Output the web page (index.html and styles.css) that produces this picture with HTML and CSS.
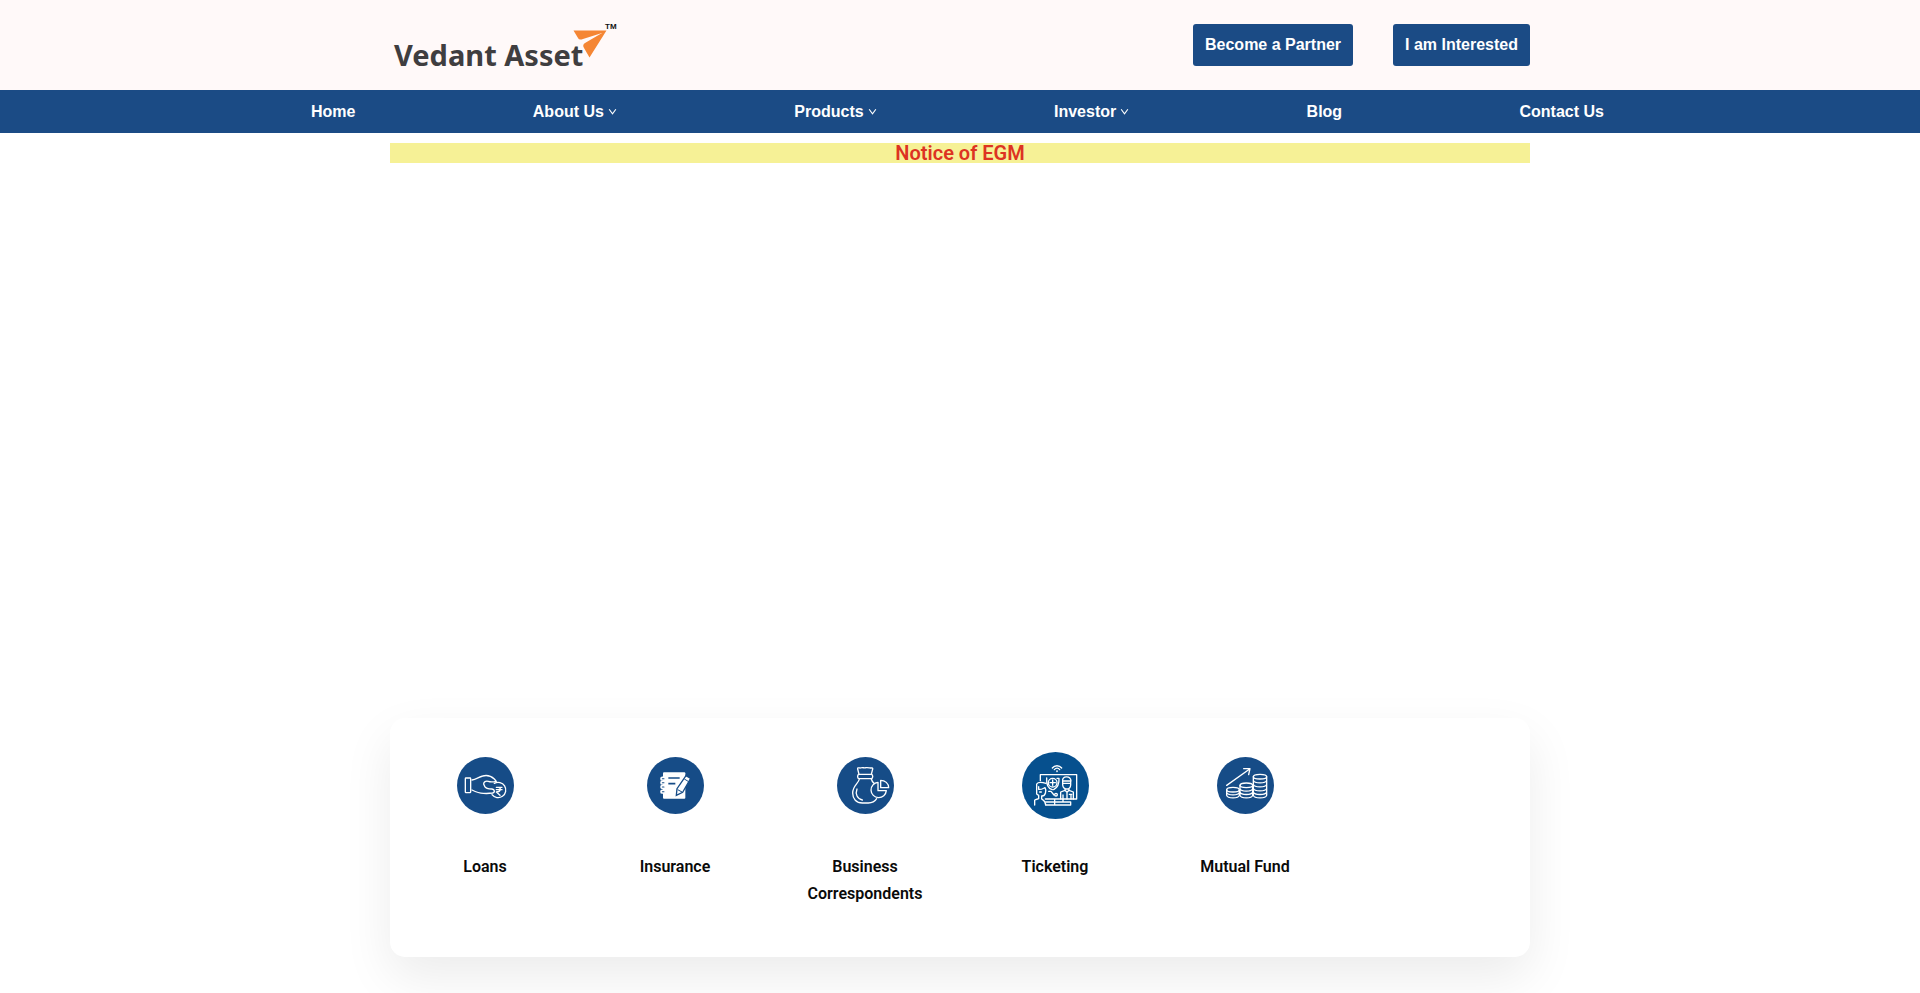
FILE: index.html
```html
<!DOCTYPE html>
<html lang="en">
<head>
<meta charset="utf-8">
<meta name="viewport" content="width=device-width, initial-scale=1">
<title>Vedant Asset</title>
<link rel="stylesheet" href="styles.css">
</head>
<body>
<header class="topbar">
  <div class="container topbar-inner">
    <a class="logo" href="#" aria-label="Vedant Asset">
      <svg width="234" height="60" viewBox="0 -5 234 60">
        <text class="logo-name" x="4" y="46">Vedant Asset</text>
        <path fill="#f58634" d="M183.500 10.500H216.500L199.500 37.500L194 28Q192 25 195 23L212 13L193 19Q189 20.500 188 18Z"/>
        <text class="logo-tm" x="215" y="9">TM</text>
      </svg>
    </a>
    <div class="actions">
      <a class="button" href="#">Become a Partner</a>
      <a class="button" href="#">I am Interested</a>
    </div>
  </div>
</header>
<nav class="mainnav" aria-label="Main">
  <ul class="nav-list">
    <li><a href="#">Home</a></li>
    <li><a href="#">About Us<svg class="chevron" viewBox="0 0 8 8"><path d="M1 2L4 6L7 2"/></svg></a></li>
    <li><a href="#">Products<svg class="chevron" viewBox="0 0 8 8"><path d="M1 2L4 6L7 2"/></svg></a></li>
    <li><a href="#">Investor<svg class="chevron" viewBox="0 0 8 8"><path d="M1 2L4 6L7 2"/></svg></a></li>
    <li><a href="#">Blog</a></li>
    <li><a href="#">Contact Us</a></li>
  </ul>
</nav>
<main class="container page">
  <a class="notice" href="#">Notice of EGM</a>
  <section class="hero"></section>
  <section class="services">
    <a class="service" href="#">
      <span class="service-icon"><svg class="disc" viewBox="51 51 171 171">
        <circle class="bg" cx="136.500" cy="136.500" r="85.500"/>
        <g class="line">
          <rect x="76" y="114" width="16" height="44" rx="2"/>
          <path d="M96 120C108 119 116 111 128 108C142 104 151 106 163 117L169 124M96 150C106 155 118 160 130 160C142 161 151 160 158 159C166 157 164 148 156 147C145 147 137 145 134 139L131 132C131 125 137 122 145 124C153 127 159 126 169 124"/>
          <path d="M163 130A23 23 0 1 1 156 164"/>
          <path d="M169 142H186M169 149H186M174 142C184 142 184 156 169 156L180 166"/>
        </g>
      </svg></span>
      <span class="service-name">Loans</span>
    </a>
    <a class="service" href="#">
      <span class="service-icon"><svg class="disc" viewBox="621 51 171 171">
        <circle class="bg" cx="706.500" cy="136.500" r="85.500"/>
        <rect x="669" y="97" width="67" height="79" rx="3" fill="#fff"/>
        <g fill="#164c87" stroke="#fff" stroke-width="5"><rect x="663" y="112" width="13" height="8" rx="4"/><rect x="663" y="124" width="13" height="8" rx="4"/><rect x="663" y="137" width="13" height="8" rx="4"/><rect x="663" y="151" width="13" height="8" rx="4"/></g>
        <g fill="none" stroke="#164c87" stroke-width="5"><path d="M685 114H719M685 131H706"/></g>
        <path d="M738 107L752 115L728 157L709 166L711 146Z" fill="#fff" stroke="#164c87" stroke-width="4"/>
        <path d="M733 117L746 125M713 149L726 156" fill="none" stroke="#164c87" stroke-width="3"/>
      </svg></span>
      <span class="service-name">Insurance</span>
    </a>
    <a class="service" href="#">
      <span class="service-icon"><svg class="disc" viewBox="51 51 171 171">
        <circle class="bg" cx="136.500" cy="136.500" r="85.500"/>
        <g class="line">
          <path d="M117 103L113 87C112 82 116 84 121 84C127 81 132 85 138 83C144 82 149 84 154 84C159 83 159 86 157 91L154 103"/>
          <rect x="113" y="103" width="45" height="13" rx="5"/>
          <path d="M118 117C116 130 98 138 98 159C98 177 109 189 127 189H145C157 189 165 184 170 176M154 117C155 121 158 126 162 130M111 147C105 162 112 177 127 180"/>
          <path d="M174 127A23 23 0 1 0 199 152H174Z"/>
          <path d="M182 121V143H206C206 130 195 121 182 121Z"/>
        </g>
      </svg></span>
      <span class="service-name">Business Correspondents</span>
    </a>
    <a class="service" href="#">
      <span class="service-icon"><svg class="disc disc-large" viewBox="606 36 201 201">
        <circle cx="706.500" cy="136.500" r="100.500" fill="#06508e"/>
        <g class="line">
          <path d="M697 84C704 75 718 75 725 84M703 89C708 83 715 83 719 89"/><circle cx="711" cy="94" r="1"/>
          <path d="M661 122V104H770V177H676M677 186H752V195H678M704 178V186M729 178V186M704 195V187"/>
          <circle cx="698" cy="128" r="13"/><path d="M698 120V136M690 128H706M680 114C679 130 681 145 697 149M711 115H717C718 132 713 143 701 149"/>
          <path d="M644 195V181C645 178 652 178 656 176V166L650 162V132C654 126 665 126 678 130M656 140V148C663 150 670 145 675 143C680 151 677 169 665 168M659 156H664M665 168V177C671 181 677 184 677 195M686 154H693L702 165"/>
          <circle cx="708" cy="164" r="4"/>
          <path d="M728 123C725 107 752 106 753 123ZM728 123V135C730 151 751 151 752 135V123M728 130H752M735 145V151L741 157L747 151V145M735 151L722 156V177M747 151L760 156V177M741 157V177M729 165V177M753 165V177M748 163H755"/>
        </g>
      </svg></span>
      <span class="service-name">Ticketing</span>
    </a>
    <a class="service" href="#">
      <span class="service-icon"><svg class="disc" viewBox="51 51 171 171">
        <circle class="bg" cx="136.500" cy="136.500" r="85.500"/>
        <g class="line">
          <path d="M80 136L149 87M131 86L150 86L146 104"/>
          <ellipse cx="99" cy="149" rx="19" ry="7"/><path d="M80 149V166C83 176 115 176 118 166V149M80 157C83 167 115 167 118 157"/>
          <ellipse cx="139" cy="136" rx="19" ry="7"/><path d="M120 136V166C123 176 155 176 158 166V136M120 146C123 156 155 156 158 146M120 156C123 166 155 166 158 156"/>
          <ellipse cx="180" cy="110" rx="20" ry="7"/><path d="M160 110V166C163 176 197 176 200 166V110M160 121C163 131 197 131 200 121M160 133C163 143 197 143 200 133M160 145C163 155 197 155 200 145M160 156C163 166 197 166 200 156"/>
        </g>
      </svg></span>
      <span class="service-name">Mutual Fund</span>
    </a>
  </section>
</main>
</body>
</html>
```

FILE: styles.css
```css
* { box-sizing: border-box; }

body {
  margin: 0;
  background: #fff;
  color: #0a0a0a;
  font-family: Roboto, sans-serif;
  font-size: 16px;
}

a { color: inherit; text-decoration: none; }

.container { max-width: 1140px; margin: 0 auto; }

.topbar { background: #fff9f9; }
.topbar-inner {
  display: flex;
  align-items: center;
  justify-content: space-between;
  min-height: 90px;
}

.logo svg { display: block; }
.logo-name {
  fill: #3f3e40;
  font: 700 29px "Noto Sans", sans-serif;
}
.logo-tm { fill: #111; font: 700 8px "Liberation Sans", sans-serif; }

.actions { display: flex; gap: 40px; }
.button {
  padding: 12px;
  border-radius: 3px;
  background: #1b4b85;
  color: #fff;
  font: 700 16px/18px "Liberation Sans", Arial, sans-serif;
}

.mainnav { background: #1b4b85; }
.nav-list {
  display: flex;
  justify-content: space-between;
  max-width: 1298px;
  margin: 0 auto;
  padding: 0;
  list-style: none;
}
.nav-list a {
  display: flex;
  align-items: center;
  gap: 4px;
  padding: 11px 5px 11px 0;
  color: #fff;
  font: 700 16px/21px "Liberation Sans", Arial, sans-serif;
}
.chevron {
  width: 9px;
  height: 9px;
  fill: none;
  stroke: #fff;
  stroke-width: 1;
}

.page { padding-bottom: 36px; }

.notice {
  display: block;
  margin-top: 10px;
  background: #f6f196;
  color: #dd3322;
  font-size: 20px;
  font-weight: 600;
  line-height: 20px;
  text-align: center;
}

.hero { height: 555px; }

.services {
  display: grid;
  grid-template-columns: repeat(6, 1fr);
  padding: 33px 0 50px;
  border-radius: 15px;
  background: #fff;
  box-shadow: 0 20px 50px rgba(0, 0, 0, 0.08);
}
.service {
  display: flex;
  flex-direction: column;
  align-items: center;
  gap: 34px;
  padding: 0 30px;
}
.service-icon {
  display: flex;
  align-items: center;
  height: 68px;
}
.service-name {
  font-weight: 600;
  line-height: 27px;
  text-align: center;
}

.disc { width: 57px; height: 57px; }
.disc-large { width: 67px; height: 67px; }
.bg { fill: #164c87; }
.line {
  fill: none;
  stroke: #fff;
  stroke-width: 4;
  stroke-linecap: round;
  stroke-linejoin: round;
}
```
